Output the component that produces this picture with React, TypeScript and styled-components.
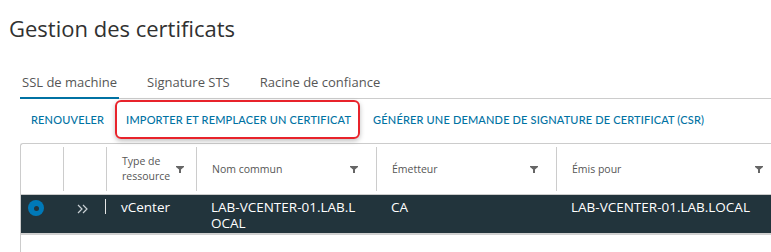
import React from "react";
import styled, { createGlobalStyle } from "styled-components";

const Global = createGlobalStyle`
  html, body { margin: 0; padding: 0; background: #ffffff; overflow: hidden; }
  body { font-family: "Open Sans", Lato, "Liberation Sans", sans-serif; }
`;

const Page = styled.div`
  width: 771px;
  height: 252px;
  overflow: hidden;
`;

const Title = styled.h1`
  margin: 0;
  padding: 14px 0 0 9px;
  height: 46px;
  box-sizing: border-box;
  font-size: 22px;
  font-weight: 400;
  color: #313131;
  line-height: 28px;
`;

const Tabs = styled.div`
  display: flex;
  margin-left: 20px;
  margin-top: 26px;
  height: 26px;
  border-bottom: 1px solid #cccccc;
  gap: 26px;
`;

const Tab = styled.div<{ $active?: boolean }>`
  height: 27px;
  box-sizing: border-box;
  padding: 0 2px;
  font-size: 13px;
  line-height: 21px;
  color: #565656;
  border-bottom: 2px solid ${(p) => (p.$active ? "#0072a3" : "transparent")};
`;

const Toolbar = styled.div`
  display: flex;
  align-items: center;
  height: 44px;
  box-sizing: border-box;
  padding: 0 0 2px 20px;
`;

const ActionWrap = styled.div`
  position: relative;
  display: flex;
`;

const Action = styled.button`
  border: none;
  background: none;
  padding: 0 11px;
  font-family: Lato, "Open Sans", sans-serif;
  font-size: 11px;
  font-weight: 500;
  letter-spacing: 0.015em;
  text-transform: uppercase;
  color: #0072a3;
  line-height: 16px;
  cursor: pointer;
`;

const Highlight = styled.span`
  position: absolute;
  left: 0;
  right: 2px;
  top: -12px;
  bottom: -11px;
  border: 2px solid #e8232b;
  border-radius: 6px;
  box-shadow: 0 2px 5px rgba(0, 0, 0, 0.25);
  pointer-events: none;
`;

const Table = styled.div`
  margin-left: 20px;
  border: 1px solid #cccccc;
  border-right: none;
  border-top-left-radius: 3px;
  width: 800px;
`;

const Row = styled.div<{ $selected?: boolean }>`
  display: grid;
  grid-template-columns: 42px 43px 90px 180px 180px 225px;
  background: ${(p) => (p.$selected ? "#22343c" : "transparent")};
  color: ${(p) => (p.$selected ? "#ffffff" : "#565656")};
`;

const HeadRow = styled(Row)`
  padding: 3px 0;
  height: 51px;
  box-sizing: border-box;
  border-bottom: 1px solid #cccccc;
`;

const HeadCell = styled.div<{ $first?: boolean; $narrow?: boolean }>`
  display: flex;
  align-items: center;
  justify-content: space-between;
  padding: 0 ${(p) => (p.$narrow ? "12px" : "18px")} 0 15px;
  border-left: ${(p) => (p.$first ? "none" : "1px solid #cccccc")};
  font-size: 10.5px;
  line-height: 15px;
  color: #565656;
`;

const Cell = styled.div`
  padding: 4px 18px 2px 15px;
  font-size: 13.5px;
  line-height: 16px;
  word-break: break-all;
`;

const SelectCell = styled.div`
  padding: 5px 0 0 7px;
`;

const Radio = styled.span`
  display: flex;
  align-items: center;
  justify-content: center;
  width: 16px;
  height: 16px;
  border-radius: 50%;
  background: #0079b8;
  &::after {
    content: "";
    width: 5px;
    height: 5px;
    border-radius: 50%;
    background: #22343c;
  }
`;

const ExpandCell = styled.div`
  display: flex;
  justify-content: space-between;
  align-items: flex-start;
  padding: 9px 0 0 14px;
`;

const RowDivider = styled.span`
  width: 1px;
  height: 15px;
  margin-top: -5px;
  background: #e6e6e6;
`;

const BodyRest = styled.div`
  height: 30px;
  border-top: 2px solid #d0d0d0;
`;

const Filter = () => (
  <svg width="8" height="7" viewBox="0 0 8 7">
    <path d="M0 0 H8 V1 L5 3.5 V7 H3 V3.5 L0 1 Z" fill="#666666" />
  </svg>
);

const Chevrons = () => (
  <svg width="12" height="10" viewBox="0 0 12 10" fill="none" stroke="#c9d0d4" strokeWidth="1.2">
    <path d="M1 1 L5 5 L1 9" />
    <path d="M6 1 L10 5 L6 9" />
  </svg>
);

export default function App() {
  return (
    <Page>
      <Global />
      <Title>Gestion des certificats</Title>
      <Tabs>
        <Tab $active>SSL de machine</Tab>
        <Tab>Signature STS</Tab>
        <Tab>Racine de confiance</Tab>
      </Tabs>
      <Toolbar>
        <Action>Renouveler</Action>
        <ActionWrap>
          <Action>Importer et remplacer un certificat</Action>
          <Highlight />
        </ActionWrap>
        <Action>Générer une demande de signature de certificat (CSR)</Action>
      </Toolbar>
      <Table>
        <HeadRow>
          <HeadCell $first />
          <HeadCell />
          <HeadCell $narrow>
            <span>Type de<br />ressource</span>
            <Filter />
          </HeadCell>
          <HeadCell>
            <span>Nom commun</span>
            <Filter />
          </HeadCell>
          <HeadCell>
            <span>Émetteur</span>
            <Filter />
          </HeadCell>
          <HeadCell>
            <span>Émis pour</span>
            <Filter />
          </HeadCell>
        </HeadRow>
        <Row $selected>
          <SelectCell>
            <Radio />
          </SelectCell>
          <ExpandCell>
            <Chevrons />
            <RowDivider />
          </ExpandCell>
          <Cell>vCenter</Cell>
          <Cell>LAB-VCENTER-01.LAB.LOCAL</Cell>
          <Cell>CA</Cell>
          <Cell>LAB-VCENTER-01.LAB.LOCAL</Cell>
        </Row>
        <BodyRest />
      </Table>
    </Page>
  );
}
